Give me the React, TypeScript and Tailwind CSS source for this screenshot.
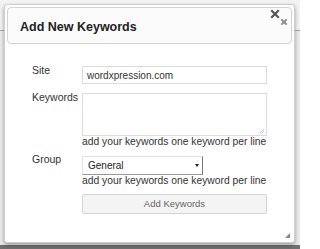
import React from "react";

const font = { fontFamily: '"Liberation Sans", Arial, sans-serif' };

function CloseIcon() {
  return (
    <svg width="20" height="18" viewBox="0 0 20 18" className="block">
      <path d="M2 2 L8 8 M8 2 L2 8" stroke="#555" strokeWidth="2.2" strokeLinecap="square" />
      <path d="M12 11 L16 15 M16 11 L12 15" stroke="#8a8a8a" strokeWidth="1.8" strokeLinecap="square" />
    </svg>
  );
}

function Helper() {
  return (
    <div className="whitespace-nowrap text-[10.3px] leading-[12px] text-[#333]">
      add your keywords one keyword per line
    </div>
  );
}

export default function App() {
  return (
    <div className="relative w-[300px] h-[249px] overflow-hidden bg-[#ececec]" style={font}>
      {/* page behind the dialog */}
      <div className="h-[31px] border-b border-[#a8a8a8] bg-[#f3f3f3]" />
      <div className="absolute left-0 right-0 bottom-0 h-[4px] bg-[#707070]" />

      {/* dialog */}
      <div className="absolute left-[4px] top-[4px] w-[291px] h-[239px] bg-white border border-[#cfcfcf] rounded-[3px] shadow-[0_2px_4px_rgba(0,0,0,0.35)] p-[2px]">
        <div className="relative h-[37px] rounded-[4px] border border-[#d3d3d3] bg-[#fbfbfb] pl-[12px] pt-[11px]">
          <span className="block text-[12.5px] leading-[16px] font-bold text-[#222]">Add New Keywords</span>
          <div className="absolute right-[1px] top-[1px]">
            <CloseIcon />
          </div>
        </div>

        <div className="mt-[22px] grid grid-cols-[50px_185px] pl-[25px] text-[10.5px] text-[#333]">
          <div className="-mt-[3px]">Site</div>
          <div>
            <div className="h-[18px] border border-[#dcdcdc] bg-white flex items-center px-[4px] text-[10px] text-[#333]">
              wordxpression.com
            </div>
          </div>

          <div className="mt-[6px]">Keywords</div>
          <div className="mt-[9px]">
            <div className="relative h-[43px] border border-[#dcdcdc] bg-white">
              <svg width="5" height="5" viewBox="0 0 5 5" className="absolute right-[1px] bottom-[1px]">
                <path d="M4 0 L0 4 M4 2 L2 4" stroke="#bbb" strokeWidth="0.8" />
              </svg>
            </div>
            <Helper />
          </div>

          <div className="mt-[4px]">Group</div>
          <div className="mt-[8px]">
            <div className="w-[121px] h-[19px] border border-[#e2e2e2] border-r-[#777] border-b-[#999] bg-white flex items-center justify-between pl-[5px] pr-[3px] text-[10px] text-[#222]">
              <span>General</span>
              <span className="w-0 h-0 border-l-[2.5px] border-r-[2.5px] border-t-[3px] border-l-transparent border-r-transparent border-t-[#222]" />
            </div>
            <Helper />
            <div className="mt-[7px] h-[20px] border border-[#d4d4d4] rounded-[2px] bg-[#f4f4f4] flex items-center justify-center text-[9.5px] text-[#666]">
              Add Keywords
            </div>
          </div>
        </div>

        <svg width="5" height="5" viewBox="0 0 5 5" className="absolute right-[4px] bottom-[4px]">
          <path d="M5 0 L5 5 L0 5 Z" fill="#888" />
        </svg>
      </div>
    </div>
  );
}
